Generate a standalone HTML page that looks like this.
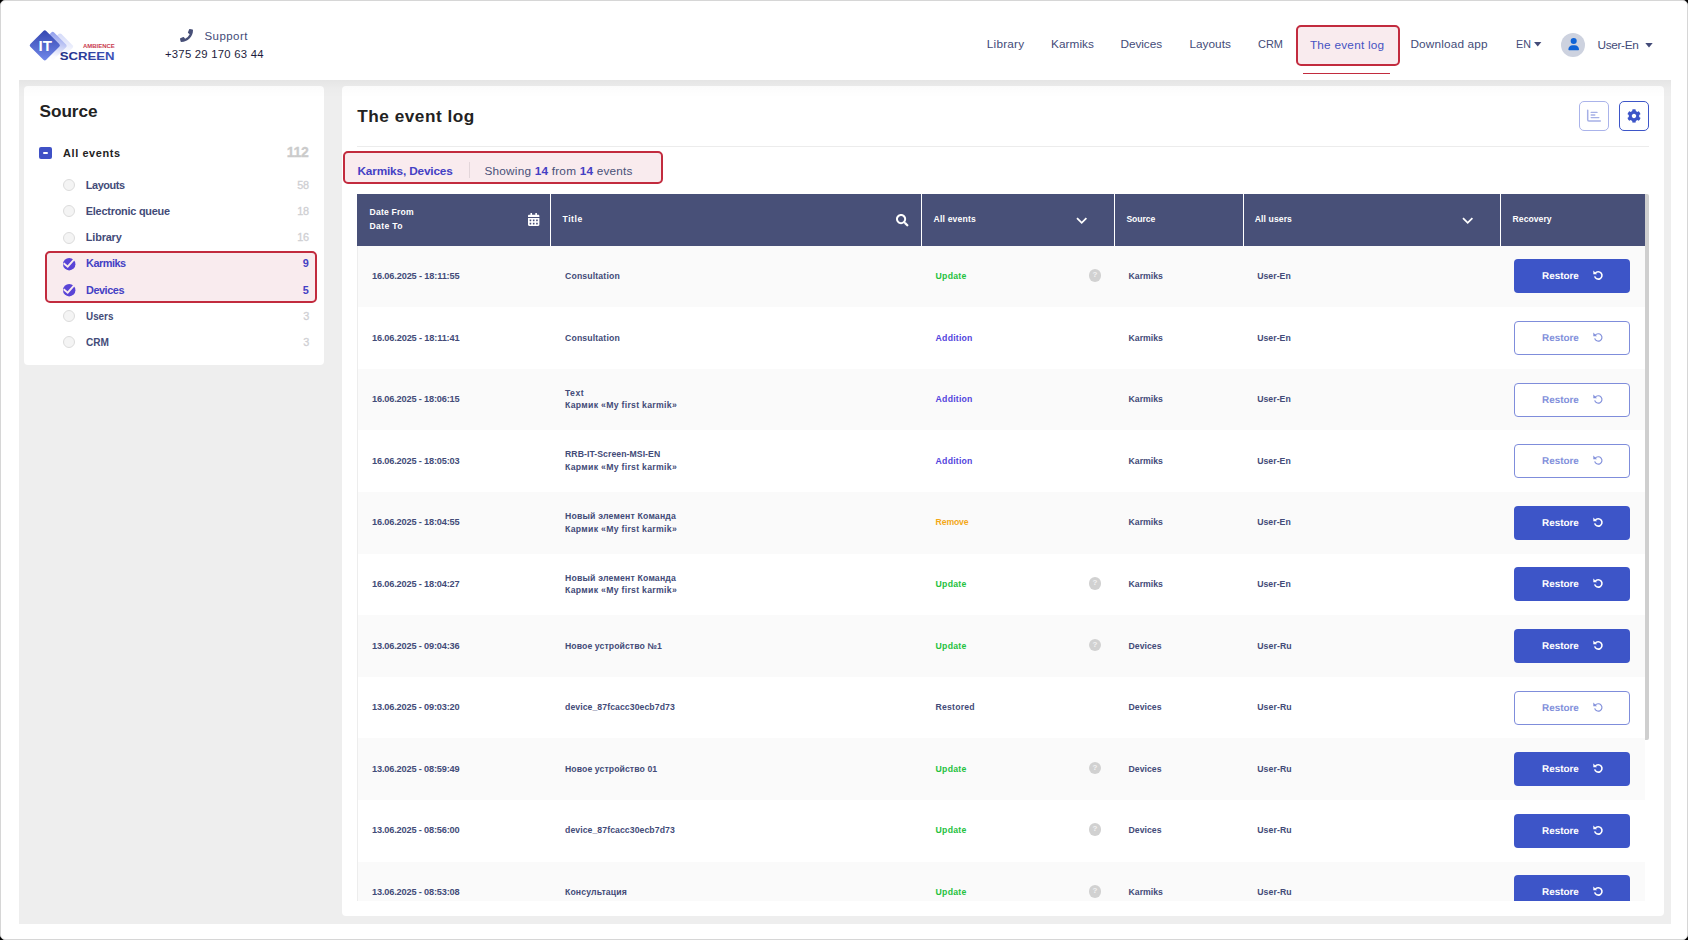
<!DOCTYPE html>
<html lang="en">
<head>
<meta charset="utf-8">
<title>The event log</title>
<style>
html,body{margin:0;padding:0;}
body{width:1688px;height:940px;overflow:hidden;background:#000;position:relative;font-family:"Liberation Sans",sans-serif;}
.b{position:absolute;box-sizing:border-box;}
.t{position:absolute;white-space:nowrap;line-height:20px;display:block;}
svg{position:absolute;overflow:visible;}

</style>
</head>
<body>
<div class="b" style="left:0;top:0;width:1688px;height:940px;background:#fff;border:1px solid #d6d6d6;border-radius:5px;"></div>
<div class="b" style="left:19px;top:80px;width:1652px;height:844px;background:#eeeeee;"></div>
<svg style="left:20px;top:20px;" width="110" height="55" viewBox="0 0 110 55">
<defs>
<linearGradient id="g1" x1="0" y1="0" x2="1" y2="1"><stop offset="0" stop-color="#3346b0"/><stop offset="1" stop-color="#7389ea"/></linearGradient>
<linearGradient id="g2" x1="0" y1="0" x2="0.600" y2="1"><stop offset="0" stop-color="#8d9bec"/><stop offset="0.550" stop-color="#c9d0f6"/><stop offset="1" stop-color="#fbfbff"/></linearGradient>
<linearGradient id="g3" x1="0" y1="0" x2="0.600" y2="1"><stop offset="0" stop-color="#d3d9f9"/><stop offset="0.600" stop-color="#f1f3fd"/><stop offset="1" stop-color="#ffffff"/></linearGradient>
<linearGradient id="g4" x1="0" y1="0" x2="1" y2="0"><stop offset="0" stop-color="#1f2e86"/><stop offset="1" stop-color="#3c52b8"/></linearGradient>
</defs>
<rect x="-9.85" y="-9.85" width="19.7" height="19.7" rx="2" transform="translate(40.0,26.6) rotate(45)" fill="url(#g3)"/>
<rect x="-10.45" y="-10.45" width="20.9" height="20.9" rx="2" transform="translate(32.7,25.9) rotate(45)" fill="url(#g2)"/>
<rect x="-11.2" y="-11.2" width="22.4" height="22.4" rx="2" transform="translate(24.8,25.4) rotate(45)" fill="url(#g1)"/>
<text x="18.6" y="30.7" font-family="Liberation Sans, sans-serif" font-weight="700" font-size="15.4" fill="#fff" textLength="13.4" lengthAdjust="spacingAndGlyphs">IT</text>
<text x="63" y="28" font-family="Liberation Sans, sans-serif" font-weight="700" font-size="6" fill="#c93a4e" textLength="31.8" lengthAdjust="spacingAndGlyphs">AMBIENCE</text>
<text x="39.7" y="39.9" font-family="Liberation Sans, sans-serif" font-weight="700" font-size="11.2" fill="url(#g4)" textLength="54.9" lengthAdjust="spacingAndGlyphs">SCREEN</text>
</svg>
<svg style="left:180px;top:29px;" width="13" height="13" viewBox="0 0 512 512"><path fill="#485078" d="M497.4 361.8l-112-48a24 24 0 0 0-28 6.900l-49.600 60.600A370.700 370.700 0 0 1 130.600 204.100l60.600-49.600a23.900 23.900 0 0 0 6.900-28l-48-112A24.200 24.200 0 0 0 122.600.600l-104 24A24 24 0 0 0 0 48c0 256.500 207.900 464 464 464a24 24 0 0 0 23.400-18.600l24-104a24.300 24.300 0 0 0-14-27.600z" transform="translate(512,0) scale(-1,1)"/></svg>
<span class="t" style="left:204.50px;top:25.90px;font-size:11.5px;font-weight:400;color:#434b78;letter-spacing:0.436px;">Support</span>
<span class="t" style="left:165.00px;top:43.90px;font-size:11.3px;font-weight:400;color:#1c1c3c;letter-spacing:0.246px;">+375 29 170 63 44</span>
<span class="t" style="left:986.80px;top:34.40px;font-size:11.8px;font-weight:400;color:#434b78;letter-spacing:0.207px;">Library</span>
<span class="t" style="left:1051.10px;top:34.40px;font-size:11.8px;font-weight:400;color:#434b78;letter-spacing:0.033px;">Karmiks</span>
<span class="t" style="left:1120.50px;top:34.40px;font-size:11.8px;font-weight:400;color:#434b78;letter-spacing:-0.060px;">Devices</span>
<span class="t" style="left:1189.40px;top:34.40px;font-size:11.8px;font-weight:400;color:#434b78;letter-spacing:0.030px;">Layouts</span>
<span class="t" style="left:1258.20px;top:34.40px;font-size:11.8px;font-weight:400;color:#434b78;letter-spacing:0.000px;transform:scaleX(0.9294);transform-origin:0 0;">CRM</span>
<div class="b" style="left:1296px;top:25px;width:104px;height:41px;background:#f9ebee;border:2px solid #c22b3e;border-radius:5px;"></div>
<span class="t" style="left:1309.90px;top:34.80px;font-size:11.8px;font-weight:400;color:#4653c2;letter-spacing:0.231px;">The event log</span>
<div class="b" style="left:1303px;top:73px;width:87px;height:1px;background:#c22b3e;"></div>
<span class="t" style="left:1410.40px;top:34.40px;font-size:11.8px;font-weight:400;color:#434b78;letter-spacing:0.158px;">Download app</span>
<span class="t" style="left:1515.60px;top:33.90px;font-size:11.8px;font-weight:400;color:#434b78;letter-spacing:0.000px;transform:scaleX(0.9075);transform-origin:0 0;">EN</span>
<svg style="left:1533.5px;top:42px;" width="7.4" height="4.4" viewBox="0 0 10 6"><path d="M0 0H10L5 6Z" fill="#434b78"/></svg>
<div class="b" style="left:1561px;top:33px;width:24px;height:24px;background:#cdd2df;border-radius:50%;"></div>
<svg style="left:1567.5px;top:38px;" width="11.4" height="12.2" viewBox="0 0 448 512"><path fill="#0f63d6" d="M224 256A128 128 0 1 0 224 0a128 128 0 1 0 0 256zm-45.700 48C79.800 304 0 383.800 0 482.300C0 498.700 13.300 512 29.700 512H418.300c16.400 0 29.700-13.300 29.700-29.700C448 383.800 368.200 304 269.700 304H178.300z"/></svg>
<span class="t" style="left:1597.50px;top:34.70px;font-size:11.8px;font-weight:400;color:#434b78;letter-spacing:-0.334px;">User-En</span>
<svg style="left:1645px;top:43px;" width="8" height="4.4" viewBox="0 0 10 6"><path d="M0 0H10L5 6Z" fill="#434b78"/></svg>
<div class="b" style="left:24px;top:86px;width:300px;height:279px;background:#fff;border-radius:4px;"></div>
<span class="t" style="left:39.60px;top:100.90px;font-size:17.2px;font-weight:700;color:#222222;letter-spacing:-0.062px;">Source</span>
<div class="b" style="left:39px;top:146.5px;width:12.5px;height:12.5px;background:#3f51c6;border-radius:2px;"></div>
<div class="b" style="left:42.6px;top:151.8px;width:5.3px;height:1.9px;background:#fff;border-radius:1px;"></div>
<span class="t" style="left:63.00px;top:142.60px;font-size:10.9px;font-weight:700;color:#222222;letter-spacing:0.623px;">All events</span>
<span class="t" style="left:286.70px;top:141.80px;font-size:14px;font-weight:700;color:#cbcbcb;letter-spacing:-0.250px;-webkit-text-stroke:0.3px #cbcbcb;">112</span>
<div class="b" style="left:45px;top:251px;width:272px;height:52px;background:#f9ebee;border:2px solid #c22b3e;border-radius:5px;"></div>
<div class="b" style="left:63px;top:179px;width:12px;height:12px;background:#f4f4f4;border:1px solid #dcdcdc;border-radius:50%;"></div>
<span class="t" style="left:85.80px;top:174.70px;font-size:10.9px;font-weight:700;color:#434b78;letter-spacing:-0.416px;">Layouts</span>
<span class="t" style="left:297.20px;top:174.70px;font-size:10.9px;font-weight:400;color:#cfcfd3;letter-spacing:-0.257px;-webkit-text-stroke:0.3px #cfcfd3;">58</span>
<div class="b" style="left:63px;top:205px;width:12px;height:12px;background:#f4f4f4;border:1px solid #dcdcdc;border-radius:50%;"></div>
<span class="t" style="left:85.80px;top:200.80px;font-size:10.9px;font-weight:700;color:#434b78;letter-spacing:-0.233px;">Electronic queue</span>
<span class="t" style="left:297.20px;top:200.80px;font-size:10.9px;font-weight:400;color:#cfcfd3;letter-spacing:-0.257px;-webkit-text-stroke:0.3px #cfcfd3;">18</span>
<div class="b" style="left:63px;top:232px;width:12px;height:12px;background:#f4f4f4;border:1px solid #dcdcdc;border-radius:50%;"></div>
<span class="t" style="left:85.80px;top:226.80px;font-size:10.9px;font-weight:700;color:#434b78;letter-spacing:-0.161px;">Library</span>
<span class="t" style="left:297.20px;top:226.80px;font-size:10.9px;font-weight:400;color:#cfcfd3;letter-spacing:-0.257px;-webkit-text-stroke:0.3px #cfcfd3;">16</span>
<svg style="left:62.8px;top:257.8px;" width="12.4" height="12.4" viewBox="0 0 24 24"><circle cx="12" cy="12" r="12" fill="#5a44d6"/><path d="M1.200 10L9.100 16.700L23.200 0.800" fill="none" stroke="#f9ebee" stroke-width="3.700"/></svg>
<span class="t" style="left:86.00px;top:252.90px;font-size:10.9px;font-weight:700;color:#4440c4;letter-spacing:-0.471px;">Karmiks</span>
<span class="t" style="left:302.80px;top:252.90px;font-size:10.9px;font-weight:700;color:#4440c4;letter-spacing:0.200px;">9</span>
<svg style="left:62.8px;top:283.8px;" width="12.4" height="12.4" viewBox="0 0 24 24"><circle cx="12" cy="12" r="12" fill="#5a44d6"/><path d="M1.200 10L9.100 16.700L23.200 0.800" fill="none" stroke="#f9ebee" stroke-width="3.700"/></svg>
<span class="t" style="left:86.00px;top:279.80px;font-size:10.9px;font-weight:700;color:#4440c4;letter-spacing:-0.453px;">Devices</span>
<span class="t" style="left:302.80px;top:279.80px;font-size:10.9px;font-weight:700;color:#4440c4;letter-spacing:0.200px;">5</span>
<div class="b" style="left:63px;top:310px;width:12px;height:12px;background:#f4f4f4;border:1px solid #dcdcdc;border-radius:50%;"></div>
<span class="t" style="left:85.80px;top:306.00px;font-size:10.9px;font-weight:700;color:#434b78;letter-spacing:0.000px;transform:scaleX(0.9068);transform-origin:0 0;">Users</span>
<span class="t" style="left:303.20px;top:306.00px;font-size:10.9px;font-weight:400;color:#cfcfd3;letter-spacing:-0.200px;-webkit-text-stroke:0.3px #cfcfd3;">3</span>
<div class="b" style="left:63px;top:336px;width:12px;height:12px;background:#f4f4f4;border:1px solid #dcdcdc;border-radius:50%;"></div>
<span class="t" style="left:85.80px;top:332.10px;font-size:10.9px;font-weight:700;color:#434b78;letter-spacing:0.000px;transform:scaleX(0.9260);transform-origin:0 0;">CRM</span>
<span class="t" style="left:303.20px;top:332.10px;font-size:10.9px;font-weight:400;color:#cfcfd3;letter-spacing:-0.200px;-webkit-text-stroke:0.3px #cfcfd3;">3</span>
<div class="b" style="left:342px;top:86px;width:1322px;height:829.5px;background:#fff;border-radius:4px;"></div>
<span class="t" style="left:357.20px;top:105.70px;font-size:17.2px;font-weight:700;color:#222222;letter-spacing:0.527px;">The event log</span>
<div class="b" style="left:357px;top:146px;width:1292px;height:1px;background:#ececec;"></div>
<div class="b" style="left:1579px;top:101px;width:30px;height:30px;background:#fff;border:1px solid #aab3ea;border-radius:5px;"></div>
<svg style="left:1586.5px;top:109.5px;" width="15" height="13" viewBox="0 0 15 13"><path d="M0.700 0.300V9.700Q0.700 10.900 1.900 10.900H13.300" fill="none" stroke="#a6b0e6" stroke-width="1.500" stroke-linecap="round" stroke-linejoin="round"/><path d="M4.200 2.400H10M4.200 5H7.800M4.200 7.600H11.800" fill="none" stroke="#a6b0e6" stroke-width="1.400" stroke-linecap="round"/></svg>
<div class="b" style="left:1619px;top:101px;width:30px;height:30px;background:#fff;border:1px solid #3d55c8;border-radius:5px;"></div>
<svg style="left:1627px;top:109px;" width="14" height="14" viewBox="0 0 512 512"><path fill="#3d55c8" d="M487.400 315.700l-42.600-24.600c4.300-23.200 4.300-47 0-70.200l42.600-24.600c4.900-2.800 7.100-8.600 5.500-14-11.100-35.600-30-67.800-54.700-94.600-3.800-4.100-10-5.100-14.800-2.300L380.800 110c-17.900-15.400-38.500-27.300-60.800-35.100V25.800c0-5.600-3.900-10.500-9.400-11.700-36.700-8.200-74.300-7.800-109.200 0-5.500 1.200-9.400 6.100-9.400 11.700V75c-22.200 7.900-42.800 19.800-60.800 35.100L88.700 85.500c-4.900-2.800-11-1.900-14.800 2.300-24.700 26.700-43.600 58.900-54.700 94.600-1.700 5.400.600 11.200 5.500 14L67.300 221c-4.300 23.200-4.300 47 0 70.200l-42.600 24.600c-4.900 2.800-7.100 8.600-5.500 14 11.100 35.600 30 67.800 54.700 94.600 3.800 4.100 10 5.100 14.800 2.300l42.600-24.600c17.900 15.400 38.500 27.300 60.800 35.100v49.200c0 5.600 3.900 10.500 9.400 11.700 36.700 8.200 74.300 7.800 109.200 0 5.500-1.200 9.400-6.100 9.400-11.700v-49.200c22.200-7.900 42.800-19.800 60.800-35.100l42.600 24.600c4.900 2.800 11 1.900 14.800-2.300 24.700-26.700 43.600-58.900 54.700-94.600 1.500-5.500-.700-11.300-5.600-14.100zM256 336c-44.100 0-80-35.900-80-80s35.900-80 80-80 80 35.900 80 80-35.900 80-80 80z"/></svg>
<div class="b" style="left:343px;top:151px;width:320px;height:32.5px;background:#f9ebee;border:2px solid #c22b3e;border-radius:5px;"></div>
<span class="t" style="left:357.50px;top:161.20px;font-size:11.8px;font-weight:700;color:#4440c4;letter-spacing:-0.164px;">Karmiks, Devices</span>
<div class="b" style="left:469px;top:162px;width:1px;height:16px;background:#e3d6da;"></div>
<span class="t" style="left:484.50px;top:161.20px;font-size:11.8px;font-weight:400;color:#485078;letter-spacing:0.209px;">Showing <b style="color:#4440c4">14</b> from <b style="color:#4440c4">14</b> events</span>
<div class="b" style="left:357px;top:194px;width:1288px;height:52px;background:#485078;"></div>
<div class="b" style="left:550px;top:194px;width:1px;height:52px;background:#fff;"></div>
<div class="b" style="left:921px;top:194px;width:1px;height:52px;background:#fff;"></div>
<div class="b" style="left:1114px;top:194px;width:1px;height:52px;background:#fff;"></div>
<div class="b" style="left:1243px;top:194px;width:1px;height:52px;background:#fff;"></div>
<div class="b" style="left:1500px;top:194px;width:1px;height:52px;background:#fff;"></div>
<span class="t" style="left:369.50px;top:201.90px;font-size:8.6px;font-weight:700;color:#fff;letter-spacing:0.205px;">Date From</span>
<span class="t" style="left:369.50px;top:215.80px;font-size:8.6px;font-weight:700;color:#fff;letter-spacing:0.362px;">Date To</span>
<span class="t" style="left:562.50px;top:208.80px;font-size:8.6px;font-weight:700;color:#fff;letter-spacing:0.567px;">Title</span>
<span class="t" style="left:933.60px;top:208.80px;font-size:8.6px;font-weight:700;color:#fff;letter-spacing:0.176px;">All events</span>
<span class="t" style="left:1126.40px;top:208.80px;font-size:8.6px;font-weight:700;color:#fff;letter-spacing:-0.051px;">Source</span>
<span class="t" style="left:1254.80px;top:208.80px;font-size:8.6px;font-weight:700;color:#fff;letter-spacing:0.097px;">All users</span>
<span class="t" style="left:1512.60px;top:208.80px;font-size:8.6px;font-weight:700;color:#fff;letter-spacing:0.040px;">Recovery</span>
<svg style="left:528px;top:213px;" width="11.4" height="13" viewBox="0 0 448 512"><path fill="#fff" d="M0 464c0 26.500 21.500 48 48 48h352c26.500 0 48-21.500 48-48V192H0v272zm320-196c0-6.600 5.400-12 12-12h40c6.600 0 12 5.400 12 12v40c0 6.600-5.400 12-12 12h-40c-6.600 0-12-5.400-12-12v-40zm0 128c0-6.600 5.400-12 12-12h40c6.600 0 12 5.400 12 12v40c0 6.600-5.400 12-12 12h-40c-6.600 0-12-5.400-12-12v-40zM192 268c0-6.600 5.400-12 12-12h40c6.600 0 12 5.400 12 12v40c0 6.600-5.400 12-12 12h-40c-6.600 0-12-5.400-12-12v-40zm0 128c0-6.600 5.400-12 12-12h40c6.600 0 12 5.400 12 12v40c0 6.600-5.400 12-12 12h-40c-6.600 0-12-5.400-12-12v-40zM64 268c0-6.600 5.400-12 12-12h40c6.600 0 12 5.400 12 12v40c0 6.600-5.400 12-12 12H76c-6.600 0-12-5.400-12-12v-40zm0 128c0-6.600 5.400-12 12-12h40c6.600 0 12 5.400 12 12v40c0 6.600-5.400 12-12 12H76c-6.600 0-12-5.400-12-12v-40zM400 64h-48V16c0-8.800-7.200-16-16-16h-32c-8.800 0-16 7.200-16 16v48H160V16c0-8.800-7.200-16-16-16h-32c-8.800 0-16 7.200-16 16v48H48C21.500 64 0 85.500 0 112v48h448v-48c0-26.500-21.500-48-48-48z"/></svg>
<svg style="left:895.6px;top:214.4px;" width="12.5" height="12.5" viewBox="0 0 512 512"><path fill="#fff" d="M505 442.700L405.300 343c-4.500-4.500-10.600-7-17-7H372c27.600-35.300 44-79.700 44-128C416 93.100 322.900 0 208 0S0 93.100 0 208s93.100 208 208 208c48.300 0 92.700-16.400 128-44v16.300c0 6.400 2.500 12.500 7 17l99.700 99.700c9.400 9.400 24.600 9.400 33.900 0l28.300-28.300c9.400-9.400 9.400-24.600.100-34zM208 336c-70.700 0-128-57.200-128-128 0-70.700 57.200-128 128-128 70.700 0 128 57.200 128 128 0 70.700-57.200 128-128 128z"/></svg>
<svg style="left:1076.2px;top:217.4px;" width="11.4" height="7.2" viewBox="0 0 11.400 7.200"><path d="M1 1.200L5.700 5.800L10.400 1.200" fill="none" stroke="#fff" stroke-width="1.800"/></svg>
<svg style="left:1462.2px;top:217.4px;" width="11.4" height="7.2" viewBox="0 0 11.400 7.200"><path d="M1 1.200L5.700 5.800L10.400 1.200" fill="none" stroke="#fff" stroke-width="1.800"/></svg>
<div class="b" style="left:357px;top:246px;width:1292px;height:655px;overflow:hidden;">
<div class="b" style="left:0px;top:0px;width:1288px;height:61px;background:#fafafa;border-left:1px solid #ededed;"></div>
<span class="t" style="left:15.00px;top:20.00px;font-size:9.2px;font-weight:700;color:#434b78;letter-spacing:-0.140px;">16.06.2025 - 18:11:55</span>
<span class="t" style="left:208.00px;top:20.00px;font-size:8.7px;font-weight:700;color:#434b78;letter-spacing:0.148px;">Consultation</span>
<span class="t" style="left:578.60px;top:20.00px;font-size:8.7px;font-weight:700;color:#25c13e;letter-spacing:0.238px;">Update</span>
<div class="b" style="left:731.7px;top:23.0px;width:12.600px;height:12.600px;border-radius:50%;background:#d1d1d1;color:#f2f2f2;font-size:8px;font-weight:700;line-height:12.600px;text-align:center;">?</div>
<span class="t" style="left:771.50px;top:20.00px;font-size:8.7px;font-weight:700;color:#434b78;letter-spacing:0.024px;">Karmiks</span>
<span class="t" style="left:900.20px;top:20.00px;font-size:8.7px;font-weight:700;color:#434b78;letter-spacing:0.032px;">User-En</span>
<div class="b" style="left:1157px;top:13px;width:116px;height:34px;background:#3d55c8;border-radius:4px;"></div>
<span class="t" style="left:1185.10px;top:20.50px;font-size:9.9px;font-weight:700;color:#ffffff;letter-spacing:-0.013px;text-rendering:geometricPrecision;">Restore</span>
<svg style="left:1235.6px;top:24.4px;" width="10.4" height="10" viewBox="0 0 10.400 10"><path d="M2.300 3.200A3.700 3.700 0 1 1 1.700 6.400" fill="none" stroke="#ffffff" stroke-width="1.6"/><path d="M0.300 0.500V4.200H4Z" fill="#ffffff"/></svg>
<div class="b" style="left:0px;top:61px;width:1288px;height:62px;background:#ffffff;border-left:1px solid #ededed;"></div>
<span class="t" style="left:15.00px;top:82.00px;font-size:9.2px;font-weight:700;color:#434b78;letter-spacing:-0.140px;">16.06.2025 - 18:11:41</span>
<span class="t" style="left:208.00px;top:82.00px;font-size:8.7px;font-weight:700;color:#434b78;letter-spacing:0.148px;">Consultation</span>
<span class="t" style="left:578.60px;top:82.00px;font-size:8.7px;font-weight:700;color:#5244dd;letter-spacing:0.227px;">Addition</span>
<span class="t" style="left:771.50px;top:82.00px;font-size:8.7px;font-weight:700;color:#434b78;letter-spacing:0.024px;">Karmiks</span>
<span class="t" style="left:900.20px;top:82.00px;font-size:8.7px;font-weight:700;color:#434b78;letter-spacing:0.032px;">User-En</span>
<div class="b" style="left:1157px;top:75px;width:116px;height:34px;background:#fff;border:1px solid #7f8ddb;border-radius:4px;"></div>
<span class="t" style="left:1185.10px;top:82.50px;font-size:9.9px;font-weight:700;color:#8290db;letter-spacing:-0.013px;text-rendering:geometricPrecision;">Restore</span>
<svg style="left:1235.6px;top:86.4px;" width="10.4" height="10" viewBox="0 0 10.400 10"><path d="M2.300 3.200A3.700 3.700 0 1 1 1.700 6.400" fill="none" stroke="#8290db" stroke-width="1.15"/><path d="M0.300 0.500V4.200H4Z" fill="#8290db"/></svg>
<div class="b" style="left:0px;top:123px;width:1288px;height:61px;background:#fafafa;border-left:1px solid #ededed;"></div>
<span class="t" style="left:15.00px;top:143.00px;font-size:9.2px;font-weight:700;color:#434b78;letter-spacing:-0.166px;">16.06.2025 - 18:06:15</span>
<span class="t" style="left:208.00px;top:137.00px;font-size:8.7px;font-weight:700;color:#434b78;letter-spacing:0.459px;">Text</span>
<span class="t" style="left:208.00px;top:149.00px;font-size:8.7px;font-weight:700;color:#434b78;letter-spacing:0.295px;">Кармик «My first karmik»</span>
<span class="t" style="left:578.60px;top:143.00px;font-size:8.7px;font-weight:700;color:#5244dd;letter-spacing:0.227px;">Addition</span>
<span class="t" style="left:771.50px;top:143.00px;font-size:8.7px;font-weight:700;color:#434b78;letter-spacing:0.024px;">Karmiks</span>
<span class="t" style="left:900.20px;top:143.00px;font-size:8.7px;font-weight:700;color:#434b78;letter-spacing:0.032px;">User-En</span>
<div class="b" style="left:1157px;top:137px;width:116px;height:34px;background:#fff;border:1px solid #7f8ddb;border-radius:4px;"></div>
<span class="t" style="left:1185.10px;top:144.50px;font-size:9.9px;font-weight:700;color:#8290db;letter-spacing:-0.013px;text-rendering:geometricPrecision;">Restore</span>
<svg style="left:1235.6px;top:148.4px;" width="10.4" height="10" viewBox="0 0 10.400 10"><path d="M2.300 3.200A3.700 3.700 0 1 1 1.700 6.400" fill="none" stroke="#8290db" stroke-width="1.15"/><path d="M0.300 0.500V4.200H4Z" fill="#8290db"/></svg>
<div class="b" style="left:0px;top:184px;width:1288px;height:62px;background:#ffffff;border-left:1px solid #ededed;"></div>
<span class="t" style="left:15.00px;top:205.00px;font-size:9.2px;font-weight:700;color:#434b78;letter-spacing:-0.166px;">16.06.2025 - 18:05:03</span>
<span class="t" style="left:208.00px;top:198.00px;font-size:8.7px;font-weight:700;color:#434b78;letter-spacing:0.055px;">RRB-IT-Screen-MSI-EN</span>
<span class="t" style="left:208.00px;top:211.00px;font-size:8.7px;font-weight:700;color:#434b78;letter-spacing:0.295px;">Кармик «My first karmik»</span>
<span class="t" style="left:578.60px;top:205.00px;font-size:8.7px;font-weight:700;color:#5244dd;letter-spacing:0.227px;">Addition</span>
<span class="t" style="left:771.50px;top:205.00px;font-size:8.7px;font-weight:700;color:#434b78;letter-spacing:0.024px;">Karmiks</span>
<span class="t" style="left:900.20px;top:205.00px;font-size:8.7px;font-weight:700;color:#434b78;letter-spacing:0.032px;">User-En</span>
<div class="b" style="left:1157px;top:198px;width:116px;height:34px;background:#fff;border:1px solid #7f8ddb;border-radius:4px;"></div>
<span class="t" style="left:1185.10px;top:205.50px;font-size:9.9px;font-weight:700;color:#8290db;letter-spacing:-0.013px;text-rendering:geometricPrecision;">Restore</span>
<svg style="left:1235.6px;top:209.4px;" width="10.4" height="10" viewBox="0 0 10.400 10"><path d="M2.300 3.200A3.700 3.700 0 1 1 1.700 6.400" fill="none" stroke="#8290db" stroke-width="1.15"/><path d="M0.300 0.500V4.200H4Z" fill="#8290db"/></svg>
<div class="b" style="left:0px;top:246px;width:1288px;height:62px;background:#fafafa;border-left:1px solid #ededed;"></div>
<span class="t" style="left:15.00px;top:266.00px;font-size:9.2px;font-weight:700;color:#434b78;letter-spacing:-0.166px;">16.06.2025 - 18:04:55</span>
<span class="t" style="left:208.00px;top:260.00px;font-size:8.7px;font-weight:700;color:#434b78;letter-spacing:0.182px;">Новый элемент Команда</span>
<span class="t" style="left:208.00px;top:273.00px;font-size:8.7px;font-weight:700;color:#434b78;letter-spacing:0.295px;">Кармик «My first karmik»</span>
<span class="t" style="left:578.60px;top:266.00px;font-size:8.7px;font-weight:700;color:#f3a818;letter-spacing:-0.154px;">Remove</span>
<span class="t" style="left:771.50px;top:266.00px;font-size:8.7px;font-weight:700;color:#434b78;letter-spacing:0.024px;">Karmiks</span>
<span class="t" style="left:900.20px;top:266.00px;font-size:8.7px;font-weight:700;color:#434b78;letter-spacing:0.032px;">User-En</span>
<div class="b" style="left:1157px;top:260px;width:116px;height:34px;background:#3d55c8;border-radius:4px;"></div>
<span class="t" style="left:1185.10px;top:267.50px;font-size:9.9px;font-weight:700;color:#ffffff;letter-spacing:-0.013px;text-rendering:geometricPrecision;">Restore</span>
<svg style="left:1235.6px;top:271.4px;" width="10.4" height="10" viewBox="0 0 10.400 10"><path d="M2.300 3.200A3.700 3.700 0 1 1 1.700 6.400" fill="none" stroke="#ffffff" stroke-width="1.6"/><path d="M0.300 0.500V4.200H4Z" fill="#ffffff"/></svg>
<div class="b" style="left:0px;top:308px;width:1288px;height:61px;background:#ffffff;border-left:1px solid #ededed;"></div>
<span class="t" style="left:15.00px;top:328.00px;font-size:9.2px;font-weight:700;color:#434b78;letter-spacing:-0.166px;">16.06.2025 - 18:04:27</span>
<span class="t" style="left:208.00px;top:322.00px;font-size:8.7px;font-weight:700;color:#434b78;letter-spacing:0.182px;">Новый элемент Команда</span>
<span class="t" style="left:208.00px;top:334.00px;font-size:8.7px;font-weight:700;color:#434b78;letter-spacing:0.295px;">Кармик «My first karmik»</span>
<span class="t" style="left:578.60px;top:328.00px;font-size:8.7px;font-weight:700;color:#25c13e;letter-spacing:0.238px;">Update</span>
<div class="b" style="left:731.7px;top:331.0px;width:12.600px;height:12.600px;border-radius:50%;background:#d1d1d1;color:#f2f2f2;font-size:8px;font-weight:700;line-height:12.600px;text-align:center;">?</div>
<span class="t" style="left:771.50px;top:328.00px;font-size:8.7px;font-weight:700;color:#434b78;letter-spacing:0.024px;">Karmiks</span>
<span class="t" style="left:900.20px;top:328.00px;font-size:8.7px;font-weight:700;color:#434b78;letter-spacing:0.032px;">User-En</span>
<div class="b" style="left:1157px;top:321px;width:116px;height:34px;background:#3d55c8;border-radius:4px;"></div>
<span class="t" style="left:1185.10px;top:328.50px;font-size:9.9px;font-weight:700;color:#ffffff;letter-spacing:-0.013px;text-rendering:geometricPrecision;">Restore</span>
<svg style="left:1235.6px;top:332.4px;" width="10.4" height="10" viewBox="0 0 10.400 10"><path d="M2.300 3.200A3.700 3.700 0 1 1 1.700 6.400" fill="none" stroke="#ffffff" stroke-width="1.6"/><path d="M0.300 0.500V4.200H4Z" fill="#ffffff"/></svg>
<div class="b" style="left:0px;top:369px;width:1288px;height:62px;background:#fafafa;border-left:1px solid #ededed;"></div>
<span class="t" style="left:15.00px;top:390.00px;font-size:9.2px;font-weight:700;color:#434b78;letter-spacing:-0.166px;">13.06.2025 - 09:04:36</span>
<span class="t" style="left:208.00px;top:390.00px;font-size:8.7px;font-weight:700;color:#434b78;letter-spacing:0.076px;">Новое устройство №1</span>
<span class="t" style="left:578.60px;top:390.00px;font-size:8.7px;font-weight:700;color:#25c13e;letter-spacing:0.238px;">Update</span>
<div class="b" style="left:731.7px;top:392.6px;width:12.600px;height:12.600px;border-radius:50%;background:#d1d1d1;color:#f2f2f2;font-size:8px;font-weight:700;line-height:12.600px;text-align:center;">?</div>
<span class="t" style="left:771.50px;top:390.00px;font-size:8.7px;font-weight:700;color:#434b78;letter-spacing:0.031px;">Devices</span>
<span class="t" style="left:900.20px;top:390.00px;font-size:8.7px;font-weight:700;color:#434b78;letter-spacing:0.103px;">User-Ru</span>
<div class="b" style="left:1157px;top:383px;width:116px;height:34px;background:#3d55c8;border-radius:4px;"></div>
<span class="t" style="left:1185.10px;top:390.50px;font-size:9.9px;font-weight:700;color:#ffffff;letter-spacing:-0.013px;text-rendering:geometricPrecision;">Restore</span>
<svg style="left:1235.6px;top:394.4px;" width="10.4" height="10" viewBox="0 0 10.400 10"><path d="M2.300 3.200A3.700 3.700 0 1 1 1.700 6.400" fill="none" stroke="#ffffff" stroke-width="1.6"/><path d="M0.300 0.500V4.200H4Z" fill="#ffffff"/></svg>
<div class="b" style="left:0px;top:431px;width:1288px;height:61px;background:#ffffff;border-left:1px solid #ededed;"></div>
<span class="t" style="left:15.00px;top:451.00px;font-size:9.2px;font-weight:700;color:#434b78;letter-spacing:-0.166px;">13.06.2025 - 09:03:20</span>
<span class="t" style="left:208.00px;top:451.00px;font-size:8.7px;font-weight:700;color:#434b78;letter-spacing:0.070px;">device_87fcacc30ecb7d73</span>
<span class="t" style="left:578.60px;top:451.00px;font-size:8.7px;font-weight:700;color:#434b78;letter-spacing:0.193px;">Restored</span>
<span class="t" style="left:771.50px;top:451.00px;font-size:8.7px;font-weight:700;color:#434b78;letter-spacing:0.031px;">Devices</span>
<span class="t" style="left:900.20px;top:451.00px;font-size:8.7px;font-weight:700;color:#434b78;letter-spacing:0.103px;">User-Ru</span>
<div class="b" style="left:1157px;top:445px;width:116px;height:34px;background:#fff;border:1px solid #7f8ddb;border-radius:4px;"></div>
<span class="t" style="left:1185.10px;top:452.50px;font-size:9.9px;font-weight:700;color:#8290db;letter-spacing:-0.013px;text-rendering:geometricPrecision;">Restore</span>
<svg style="left:1235.6px;top:456.4px;" width="10.4" height="10" viewBox="0 0 10.400 10"><path d="M2.300 3.200A3.700 3.700 0 1 1 1.700 6.400" fill="none" stroke="#8290db" stroke-width="1.15"/><path d="M0.300 0.500V4.200H4Z" fill="#8290db"/></svg>
<div class="b" style="left:0px;top:492px;width:1288px;height:62px;background:#fafafa;border-left:1px solid #ededed;"></div>
<span class="t" style="left:15.00px;top:513.00px;font-size:9.2px;font-weight:700;color:#434b78;letter-spacing:-0.166px;">13.06.2025 - 08:59:49</span>
<span class="t" style="left:208.00px;top:513.00px;font-size:8.7px;font-weight:700;color:#434b78;letter-spacing:0.079px;">Новое устройство 01</span>
<span class="t" style="left:578.60px;top:513.00px;font-size:8.7px;font-weight:700;color:#25c13e;letter-spacing:0.238px;">Update</span>
<div class="b" style="left:731.7px;top:515.8px;width:12.600px;height:12.600px;border-radius:50%;background:#d1d1d1;color:#f2f2f2;font-size:8px;font-weight:700;line-height:12.600px;text-align:center;">?</div>
<span class="t" style="left:771.50px;top:513.00px;font-size:8.7px;font-weight:700;color:#434b78;letter-spacing:0.031px;">Devices</span>
<span class="t" style="left:900.20px;top:513.00px;font-size:8.7px;font-weight:700;color:#434b78;letter-spacing:0.103px;">User-Ru</span>
<div class="b" style="left:1157px;top:506px;width:116px;height:34px;background:#3d55c8;border-radius:4px;"></div>
<span class="t" style="left:1185.10px;top:513.50px;font-size:9.9px;font-weight:700;color:#ffffff;letter-spacing:-0.013px;text-rendering:geometricPrecision;">Restore</span>
<svg style="left:1235.6px;top:517.4px;" width="10.4" height="10" viewBox="0 0 10.400 10"><path d="M2.300 3.200A3.700 3.700 0 1 1 1.700 6.400" fill="none" stroke="#ffffff" stroke-width="1.6"/><path d="M0.300 0.500V4.200H4Z" fill="#ffffff"/></svg>
<div class="b" style="left:0px;top:554px;width:1288px;height:62px;background:#ffffff;border-left:1px solid #ededed;"></div>
<span class="t" style="left:15.00px;top:574.00px;font-size:9.2px;font-weight:700;color:#434b78;letter-spacing:-0.166px;">13.06.2025 - 08:56:00</span>
<span class="t" style="left:208.00px;top:574.00px;font-size:8.7px;font-weight:700;color:#434b78;letter-spacing:0.070px;">device_87fcacc30ecb7d73</span>
<span class="t" style="left:578.60px;top:574.00px;font-size:8.7px;font-weight:700;color:#25c13e;letter-spacing:0.238px;">Update</span>
<div class="b" style="left:731.7px;top:577.4px;width:12.600px;height:12.600px;border-radius:50%;background:#d1d1d1;color:#f2f2f2;font-size:8px;font-weight:700;line-height:12.600px;text-align:center;">?</div>
<span class="t" style="left:771.50px;top:574.00px;font-size:8.7px;font-weight:700;color:#434b78;letter-spacing:0.031px;">Devices</span>
<span class="t" style="left:900.20px;top:574.00px;font-size:8.7px;font-weight:700;color:#434b78;letter-spacing:0.103px;">User-Ru</span>
<div class="b" style="left:1157px;top:568px;width:116px;height:34px;background:#3d55c8;border-radius:4px;"></div>
<span class="t" style="left:1185.10px;top:575.50px;font-size:9.9px;font-weight:700;color:#ffffff;letter-spacing:-0.013px;text-rendering:geometricPrecision;">Restore</span>
<svg style="left:1235.6px;top:579.4px;" width="10.4" height="10" viewBox="0 0 10.400 10"><path d="M2.300 3.200A3.700 3.700 0 1 1 1.700 6.400" fill="none" stroke="#ffffff" stroke-width="1.6"/><path d="M0.300 0.500V4.200H4Z" fill="#ffffff"/></svg>
<div class="b" style="left:0px;top:616px;width:1288px;height:61px;background:#fafafa;border-left:1px solid #ededed;"></div>
<span class="t" style="left:15.00px;top:636.00px;font-size:9.2px;font-weight:700;color:#434b78;letter-spacing:-0.166px;">13.06.2025 - 08:53:08</span>
<span class="t" style="left:208.00px;top:636.00px;font-size:8.7px;font-weight:700;color:#434b78;letter-spacing:0.130px;">Консультация</span>
<span class="t" style="left:578.60px;top:636.00px;font-size:8.7px;font-weight:700;color:#25c13e;letter-spacing:0.238px;">Update</span>
<div class="b" style="left:731.7px;top:639.0px;width:12.600px;height:12.600px;border-radius:50%;background:#d1d1d1;color:#f2f2f2;font-size:8px;font-weight:700;line-height:12.600px;text-align:center;">?</div>
<span class="t" style="left:771.50px;top:636.00px;font-size:8.7px;font-weight:700;color:#434b78;letter-spacing:0.024px;">Karmiks</span>
<span class="t" style="left:900.20px;top:636.00px;font-size:8.7px;font-weight:700;color:#434b78;letter-spacing:0.103px;">User-Ru</span>
<div class="b" style="left:1157px;top:629px;width:116px;height:34px;background:#3d55c8;border-radius:4px;"></div>
<span class="t" style="left:1185.10px;top:636.50px;font-size:9.9px;font-weight:700;color:#ffffff;letter-spacing:-0.013px;text-rendering:geometricPrecision;">Restore</span>
<svg style="left:1235.6px;top:640.4px;" width="10.4" height="10" viewBox="0 0 10.400 10"><path d="M2.300 3.200A3.700 3.700 0 1 1 1.700 6.400" fill="none" stroke="#ffffff" stroke-width="1.6"/><path d="M0.300 0.500V4.200H4Z" fill="#ffffff"/></svg>
</div>
<div class="b" style="left:1645px;top:194px;width:4px;height:546px;background:#cfcfcf;border-radius:0 2px 2px 0;"></div>
<div class="b" style="left:19px;top:80px;width:1652px;height:18px;background:linear-gradient(rgba(0,0,0,0.038),rgba(0,0,0,0.012) 45%,rgba(0,0,0,0));pointer-events:none;"></div>
</body>
</html>
